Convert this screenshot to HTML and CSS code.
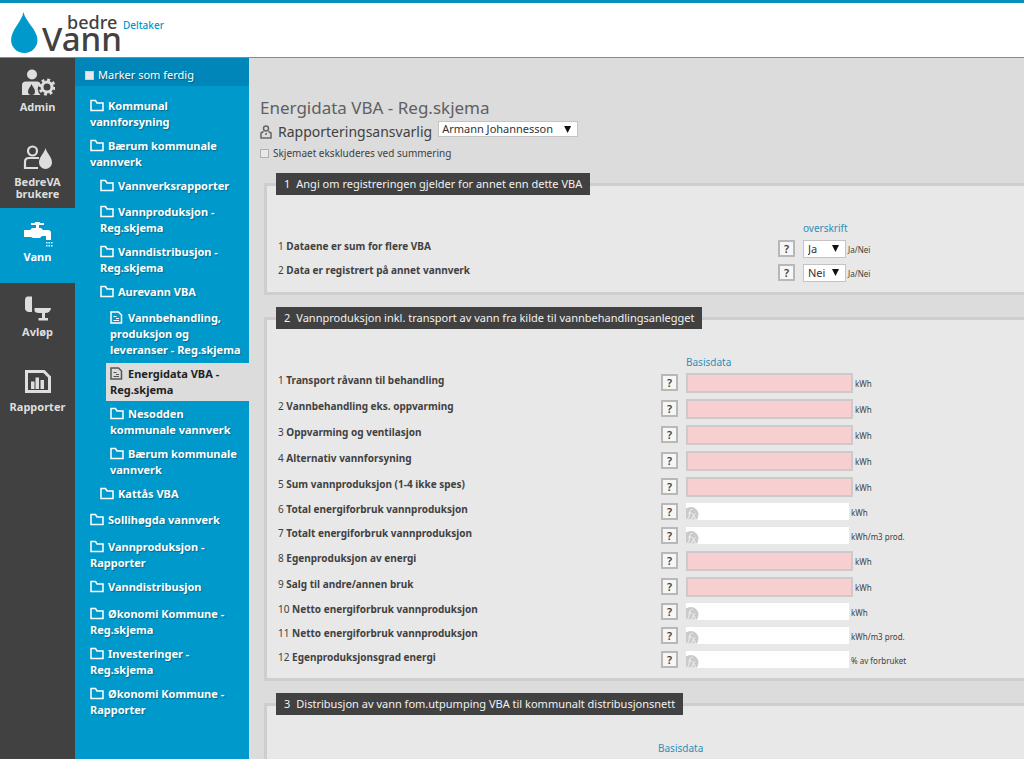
FILE: index.html
```html
<!DOCTYPE html>
<html lang="no">
<head>
<meta charset="utf-8">
<meta name="viewport" content="width=device-width, initial-scale=1">
<title>bedreVann - Energidata VBA</title>
<link rel="stylesheet" href="styles.css">
</head>
<body>
<svg class="symbols" aria-hidden="true">
  <symbol id="folder" viewBox="0 0 14 13"><path d="M1 11.500V1.500h4.500l1.500 2.500h6v7.500z" fill="none" stroke="currentColor" stroke-width="1.500"/></symbol>
  <symbol id="doc" viewBox="0 0 14 13"><path d="M1 1h7.500L11.500 4v8H1z" fill="none" stroke="currentColor" stroke-width="1.500"/><path d="M3.500 5.500h3M6 7.500h3M3.500 9.500h5.500" fill="none" stroke="currentColor"/></symbol>
  <symbol id="fx" viewBox="0 0 13 14"><path d="M0 2.500Q2 1 5 1a7.500 7.500 0 0 1 7.500 7.500Q12.500 11 11 13.500H0z" fill="#cacaca"/><path d="M1 13c2 0 2-3 2.500-6s1-3.500 3-3.500M2.500 7h3M6.500 7.500l3 5.500M9.500 7.500c-2 1-2.500 3-4 5.500" fill="none" stroke="#f4f4f4"/></symbol>
</svg>
<header class="top">
  <a class="logo" href="#">
    <svg width="112" height="50" viewBox="0 0 112 50" role="img" aria-label="bedre Vann">
      <path d="M12.500 5C14 14 26.500 23 26.500 33a13.200 13 0 0 1-26.400 0C.1 23 11 14 12.500 5z" fill="#0099cc"/>
      <text class="logo-small" x="56" y="22">bedre</text>
      <text class="logo-big" x="31" y="44">Vann</text>
    </svg>
  </a>
  <span class="role">Deltaker</span>
</header>
<div class="layout">
  <nav class="rail" aria-label="Hovedmeny">
    <a href="#" class="rail-item">
      <svg width="34" height="28" viewBox="0 0 34 28" fill="#dedede"><circle cx="11" cy="5.500" r="5"/><path d="M1 26V16q0-3.500 4-3.500h11q2.500 0 3.500 2-3.500 2.500-2.500 7 .5 3 2.500 4.500z"/><path d="M10.500 15c1 3 3.500 4.500 3.500 7.500a3.500 3.500 0 0 1-7 0c0-3 2.500-4.500 3.500-7.500z" fill="#414141"/><circle cx="26" cy="18" r="5" fill="none" stroke="#dedede" stroke-width="3"/><circle cx="26" cy="18" r="7.300" fill="none" stroke="#dedede" stroke-width="2.600" stroke-dasharray="2.900 2.830"/></svg>
      <span>Admin</span>
    </a>
    <a href="#" class="rail-item">
      <svg width="30" height="28" viewBox="0 0 30 28"><circle cx="9.500" cy="7" r="4.500" fill="none" stroke="#dedede" stroke-width="2.200"/><path d="M16 14H6q-4 0-4 4v6h13" fill="none" stroke="#dedede" stroke-width="2.200"/><path d="M22.500 4c1 5 6.500 9 6.500 14.500a6.500 6.500 0 0 1-13 0C16 13 21.500 9 22.500 4z" fill="#dedede"/></svg>
      <span>BedreVA<br>brukere</span>
    </a>
    <a href="#" class="rail-item is-active">
      <svg width="30" height="28" viewBox="0 0 30 28" fill="#fff"><path d="M8 4h13v2H8zM12 3h5v3h-5zM13 6h3v3h-3zM1 11h6l2-2h9l2 2h5q3 0 3 3v7h-5v-4h-4l-2 2H10l-2-1H1z"/><path d="M23 23h1.500v1.500H23zM25.500 23H27v1.500h-1.500zM28 23h1.500v1.500H28zM23 26h1.500v1.500H23zM25.500 26H27v1.500h-1.500zM28 26h1.500v1.500H28z"/></svg>
      <span>Vann</span>
    </a>
    <a href="#" class="rail-item">
      <svg width="28" height="28" viewBox="0 0 28 28" fill="#dedede"><path d="M3 2.500h5V18H5q-3 0-4-3V6q0-3 2-3.500zM10.500 14H27q-.5 5-6 5v5h3v2.500h-9.500V24H18v-5h-3.500q-3 0-4-2z"/></svg>
      <span>Avløp</span>
    </a>
    <a href="#" class="rail-item">
      <svg width="28" height="28" viewBox="0 0 28 28"><path d="M2.500 2.500H20l5.500 5.500v14.500h-23z" fill="none" stroke="#dedede" stroke-width="3"/><path d="M7 12.500h3.500V20H7zM11.500 8.500H15V20h-3.500zM16.500 11H20v9h-3.500z" fill="#dedede"/></svg>
      <span>Rapporter</span>
    </a>
  </nav>
  <nav class="tree" aria-label="Skjemaer">
    <div class="tree-head"><input type="checkbox" class="box" id="ferdig"><label for="ferdig">Marker som ferdig</label></div>
    <ul class="level">
      <li><a class="node" href="#"><svg class="ico"><use href="#folder"/></svg>Kommunal vannforsyning</a></li>
      <li><a class="node" href="#"><svg class="ico"><use href="#folder"/></svg>Bærum kommunale vannverk</a>
        <ul class="level">
          <li><a class="node" href="#"><svg class="ico"><use href="#folder"/></svg>Vannverksrapporter</a></li>
          <li><a class="node" href="#"><svg class="ico"><use href="#folder"/></svg>Vannproduksjon - Reg.skjema</a></li>
          <li><a class="node" href="#"><svg class="ico"><use href="#folder"/></svg>Vanndistribusjon - Reg.skjema</a></li>
          <li><a class="node" href="#"><svg class="ico"><use href="#folder"/></svg>Aurevann VBA</a>
            <ul class="level">
              <li><a class="node" href="#"><svg class="ico"><use href="#doc"/></svg>Vannbehandling, produksjon og leveranser - Reg.skjema</a></li>
              <li><a class="node is-current" href="#"><svg class="ico"><use href="#doc"/></svg>Energidata VBA - Reg.skjema</a></li>
              <li><a class="node" href="#"><svg class="ico"><use href="#folder"/></svg>Nesodden kommunale vannverk</a></li>
              <li><a class="node" href="#"><svg class="ico"><use href="#folder"/></svg>Bærum kommunale vannverk</a></li>
            </ul>
          </li>
          <li><a class="node" href="#"><svg class="ico"><use href="#folder"/></svg>Kattås VBA</a></li>
        </ul>
      </li>
      <li><a class="node" href="#"><svg class="ico"><use href="#folder"/></svg>Sollihøgda vannverk</a></li>
      <li><a class="node" href="#"><svg class="ico"><use href="#folder"/></svg>Vannproduksjon - Rapporter</a></li>
      <li><a class="node" href="#"><svg class="ico"><use href="#folder"/></svg>Vanndistribusjon</a></li>
      <li><a class="node" href="#"><svg class="ico"><use href="#folder"/></svg>Økonomi Kommune - Reg.skjema</a></li>
      <li><a class="node" href="#"><svg class="ico"><use href="#folder"/></svg>Investeringer - Reg.skjema</a></li>
      <li><a class="node" href="#"><svg class="ico"><use href="#folder"/></svg>Økonomi Kommune - Rapporter</a></li>
    </ul>
  </nav>
  <main class="content">
    <h1 class="title">Energidata VBA - Reg.skjema</h1>
    <div class="responsible">
      <svg width="12" height="14" viewBox="0 0 12 14" fill="none" stroke="#666" stroke-width="1.500"><circle cx="6" cy="3.500" r="2.500"/><path d="M3.500 6.500L1 8v5h10V8L8.500 6.500M6 8v2"/></svg>
      <label for="ansvarlig">Rapporteringsansvarlig</label>
      <span class="pick pick-wide"><select id="ansvarlig"><option>Armann Johannesson</option></select></span>
    </div>
    <div class="exclude"><input type="checkbox" class="box" id="ekskl"><label for="ekskl">Skjemaet ekskluderes ved summering</label></div>

    <fieldset class="panel">
      <legend><span class="num">1</span>Angi om registreringen gjelder for annet enn dette VBA</legend>
      <table class="grid">
        <colgroup><col class="c-name-wide"><col class="c-help"><col></colgroup>
        <thead><tr><th></th><th></th><th scope="col">overskrift</th></tr></thead>
        <tbody>
          <tr class="row-calc"><td><span class="no">1</span> <label for="a1">Dataene er sum for flere VBA</label></td><td><button class="help" type="button">?</button></td><td><div class="field"><span class="pick"><select id="a1"><option>Ja</option><option>Nei</option></select></span><span class="unit">Ja/Nei</span></div></td></tr>
          <tr class="row-calc"><td><span class="no">2</span> <label for="a2">Data er registrert på annet vannverk</label></td><td><button class="help" type="button">?</button></td><td><div class="field"><span class="pick"><select id="a2"><option>Nei</option><option>Ja</option></select></span><span class="unit">Ja/Nei</span></div></td></tr>
        </tbody>
      </table>
    </fieldset>

    <fieldset class="panel panel-tight">
      <legend><span class="num">2</span>Vannproduksjon inkl. transport av vann fra kilde til vannbehandlingsanlegget</legend>
      <table class="grid">
        <colgroup><col class="c-name"><col class="c-help"><col></colgroup>
        <thead><tr><th></th><th></th><th scope="col">Basisdata</th></tr></thead>
        <tbody>
          <tr class="row-edit"><td><span class="no">1</span> <label for="b1">Transport råvann til behandling</label></td><td><button class="help" type="button">?</button></td><td><div class="field"><input class="entry" id="b1" type="text"><span class="unit">kWh</span></div></td></tr>
          <tr class="row-edit"><td><span class="no">2</span> <label for="b2">Vannbehandling eks. oppvarming</label></td><td><button class="help" type="button">?</button></td><td><div class="field"><input class="entry" id="b2" type="text"><span class="unit">kWh</span></div></td></tr>
          <tr class="row-edit"><td><span class="no">3</span> <label for="b3">Oppvarming og ventilasjon</label></td><td><button class="help" type="button">?</button></td><td><div class="field"><input class="entry" id="b3" type="text"><span class="unit">kWh</span></div></td></tr>
          <tr class="row-edit"><td><span class="no">4</span> <label for="b4">Alternativ vannforsyning</label></td><td><button class="help" type="button">?</button></td><td><div class="field"><input class="entry" id="b4" type="text"><span class="unit">kWh</span></div></td></tr>
          <tr class="row-edit"><td><span class="no">5</span> <label for="b5">Sum vannproduksjon (1-4 ikke spes)</label></td><td><button class="help" type="button">?</button></td><td><div class="field"><input class="entry" id="b5" type="text"><span class="unit">kWh</span></div></td></tr>
          <tr class="row-calc"><td><span class="no">6</span> <label for="b6">Total energiforbruk vannproduksjon</label></td><td><button class="help" type="button">?</button></td><td><div class="field"><span class="calc"><svg><use href="#fx"/></svg><input id="b6" type="text" readonly></span><span class="unit">kWh</span></div></td></tr>
          <tr class="row-calc"><td><span class="no">7</span> <label for="b7">Totalt energiforbruk vannproduksjon</label></td><td><button class="help" type="button">?</button></td><td><div class="field"><span class="calc"><svg><use href="#fx"/></svg><input id="b7" type="text" readonly></span><span class="unit">kWh/m3 prod.</span></div></td></tr>
          <tr class="row-edit"><td><span class="no">8</span> <label for="b8">Egenproduksjon av energi</label></td><td><button class="help" type="button">?</button></td><td><div class="field"><input class="entry" id="b8" type="text"><span class="unit">kWh</span></div></td></tr>
          <tr class="row-edit"><td><span class="no">9</span> <label for="b9">Salg til andre/annen bruk</label></td><td><button class="help" type="button">?</button></td><td><div class="field"><input class="entry" id="b9" type="text"><span class="unit">kWh</span></div></td></tr>
          <tr class="row-calc"><td><span class="no">10</span> <label for="b10">Netto energiforbruk vannproduksjon</label></td><td><button class="help" type="button">?</button></td><td><div class="field"><span class="calc"><svg><use href="#fx"/></svg><input id="b10" type="text" readonly></span><span class="unit">kWh</span></div></td></tr>
          <tr class="row-calc"><td><span class="no">11</span> <label for="b11">Netto energiforbruk vannproduksjon</label></td><td><button class="help" type="button">?</button></td><td><div class="field"><span class="calc"><svg><use href="#fx"/></svg><input id="b11" type="text" readonly></span><span class="unit">kWh/m3 prod.</span></div></td></tr>
          <tr class="row-calc"><td><span class="no">12</span> <label for="b12">Egenproduksjonsgrad energi</label></td><td><button class="help" type="button">?</button></td><td><div class="field"><span class="calc"><svg><use href="#fx"/></svg><input id="b12" type="text" readonly></span><span class="unit">% av forbruket</span></div></td></tr>
        </tbody>
      </table>
    </fieldset>

    <fieldset class="panel">
      <legend><span class="num">3</span>Distribusjon av vann fom.utpumping VBA til kommunalt distribusjonsnett</legend>
      <table class="grid">
        <colgroup><col class="c-name-short"><col class="c-help"><col></colgroup>
        <thead><tr><th></th><th></th><th scope="col">Basisdata</th></tr></thead>
      </table>
    </fieldset>
  </main>
</div>
</body>
</html>
```
FILE: styles.css
```css
* { box-sizing: border-box; }
html, body { height: 100%; }
body {
  margin: 0;
  display: flex;
  flex-direction: column;
  overflow: hidden;
  background: #dcdcdc;
  color: #414141;
  font: 11px/16px "Noto Sans", "Open Sans", sans-serif;
}
a { color: inherit; text-decoration: none; }
svg { flex: none; }
.symbols { position: absolute; width: 0; height: 0; }
input, select, button { font: inherit; color: inherit; }

.top {
  flex: none;
  display: flex;
  height: 58px;
  padding: 4px 0 0 11px;
  border-top: 3px solid #0a8fba;
  border-bottom: 1px solid #888;
  background: #fff;
}
.logo svg { display: block; overflow: visible; }
.logo-small { font-size: 18px; font-weight: 500; fill: #414141; }
.logo-big { font-size: 33px; font-weight: 500; fill: #414141; }
.role { padding-top: 10px; color: #0099cc; font-size: 10px; font-weight: 500; }

.layout { flex: 1; min-height: 0; display: flex; overflow: hidden; }

.rail { flex: none; width: 75px; background: #414141; }
.rail-item {
  display: flex;
  flex-direction: column;
  align-items: center;
  gap: 4px;
  height: 75px;
  padding-top: 11px;
  color: #dedede;
  font-weight: 700;
  line-height: 12px;
  text-align: center;
}
.rail-item.is-active { background: #0099cc; color: #fff; }

.tree {
  flex: none;
  width: 174px;
  background: #0099cc;
  color: #fff;
  font-weight: 700;
  text-shadow: 1px 1px 1px rgba(0, 0, 0, .3);
}
.tree-head {
  display: flex;
  align-items: center;
  gap: 4px;
  height: 28px;
  padding: 6px 10px 0;
  background: #0086b8;
  font-weight: 400;
}
.box {
  appearance: none;
  width: 9px;
  height: 9px;
  margin: 0;
  background: #e8e8e8;
  border: 1px solid #d2d2d2;
}
.level { margin: 0; padding: 0; list-style: none; }
.level > li { display: flow-root; }
.tree > .level { padding-top: 8px; }
.node { display: block; min-height: 25px; margin: 1px 0; padding: 3px 5px 3px 15px; }
.level .level .node { min-height: 24px; padding-left: 25px; }
.level .level .level .node { margin-left: 31px; padding-left: 4px; }
.node.is-current { background: #dcdcdc; color: #222; text-shadow: none; }
.ico { width: 14px; height: 13px; margin-right: 4px; vertical-align: -2px; }
.is-current .ico { color: #555; }

.content { flex: 1; min-width: 0; padding: 39px 0 0 11px; }
.title { margin: 0; font-size: 17px; font-weight: 400; line-height: 22px; color: #606060; }
.responsible { display: flex; align-items: center; gap: 6px; height: 24px; padding-top: 2px; font-size: 14px; }
.exclude { display: flex; align-items: center; gap: 4px; height: 20px; font-size: 10px; }
.exclude .box { border-color: #b0b0b0; }

.pick { position: relative; display: inline-flex; width: 43px; height: 18px; font-size: 11px; }
.pick::after {
  content: "";
  position: absolute;
  right: 7px;
  top: 5px;
  width: 7px;
  height: 7px;
  background: #111;
  clip-path: polygon(0 0, 100% 0, 50% 100%);
  pointer-events: none;
}
.pick select {
  appearance: none;
  width: 100%;
  padding: 0 4px;
  border: 1px solid #c4c4c4;
  border-radius: 0;
  background: #fff;
  color: #333;
  line-height: 14px;
}
.pick-wide { align-self: flex-start; width: 140px; height: 16px; }
.pick-wide select { padding: 0 3px; }

.panel {
  min-width: 0;
  margin: 10px 0 12px 4px;
  padding: 0 0 5px 10px;
  border: 3px solid #cecece;
  border-right: 0;
  background: #e8e8e8;
}
.panel-tight { padding-bottom: 4px; }
.panel legend {
  margin-left: -1px;
  padding: 3px 8px;
  background: #414141;
  color: #f2f2f2;
}
.num { margin-right: 6px; }

.grid { width: 100%; border-collapse: collapse; table-layout: fixed; }
.c-name { width: 384px; }
.c-name-wide { width: 501px; }
.c-name-short { width: 356px; }
.c-help { width: 25px; }
.grid th { height: 44px; padding: 0 0 3px; vertical-align: bottom; text-align: left; font-size: 10px; font-weight: 400; color: #2f8fba; }
.panel-tight .grid th { height: 43px; padding-bottom: 2px; }
.grid td { padding: 0; vertical-align: top; font-size: 10px; line-height: 14px; }
.grid td:first-child { padding-left: 1px; }
.grid label { font-weight: 700; }
.row-edit { height: 26px; }
.row-calc { height: 24px; }
.row-edit td { padding-top: 1px; }
.row-edit .help { margin-top: 1px; }
.row-calc .help, .row-calc .field { margin-top: 1px; }
.help {
  display: block;
  width: 17px;
  height: 17px;
  padding: 0;
  border: 2px solid #b8b8b8;
  background: #f6f6f6;
  font-size: 11px;
  font-weight: 600;
  line-height: 12px;
}
.field { display: flex; align-items: center; gap: 2px; }
.entry { width: 167px; height: 20px; border: 2px solid #cfcaca; background: #f7cfd1; }
.calc { display: flex; align-items: flex-end; width: 163px; height: 17px; background: #fff; }
.calc svg { width: 13px; height: 14px; }
.calc input { flex: 1; min-width: 0; height: 17px; padding: 0; border: 0; background: transparent; }
.unit { padding-top: 2px; font-size: 8px; }
```
